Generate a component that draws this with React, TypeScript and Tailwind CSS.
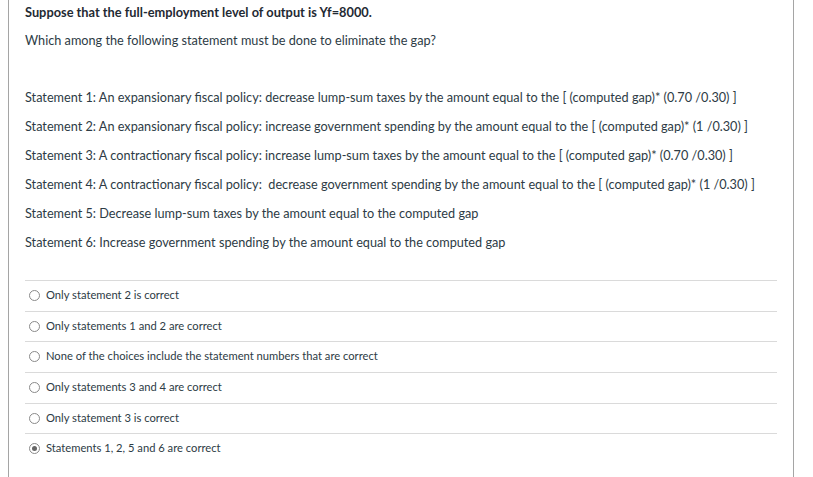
const statements = [
  'Statement 1: An expansionary fiscal policy: decrease lump-sum taxes by the amount equal to the [ (computed gap)* (0.70 /0.30) ]',
  'Statement 2: An expansionary fiscal policy: increase government spending by the amount equal to the [ (computed gap)* (1 /0.30) ]',
  'Statement 3: A contractionary fiscal policy: increase lump-sum taxes by the amount equal to the [ (computed gap)* (0.70 /0.30) ]',
  'Statement 4: A contractionary fiscal policy:\u00a0 decrease government spending by the amount equal to the [ (computed gap)* (1 /0.30) ]',
  'Statement 5: Decrease lump-sum taxes by the amount equal to the computed gap',
  'Statement 6: Increase government spending by the amount equal to the computed gap',
]

const options = [
  'Only statement 2 is correct',
  'Only statements 1 and 2 are correct',
  'None of the choices include the statement numbers that are correct',
  'Only statements 3 and 4 are correct',
  'Only statement 3 is correct',
  'Statements 1, 2, 5 and 6 are correct',
]

export default function App() {
  return (
    <div className="h-[477px] w-[813px] overflow-hidden bg-white font-['Lato',sans-serif] text-[#2d3b45]">
      <div className="ml-2 h-full w-[786px] border-x border-[#a5a5a5] pl-4 pr-4">
        <p className="pt-[4px] text-[12.8px] font-bold leading-4 text-[#1f2a33]">
          Suppose that the full-employment level of output is Yf=8000.
        </p>
        <p className="mt-[12px] text-[12.7px] leading-4">
          Which among the following statement must be done to eliminate the gap?
        </p>

        <div className="mt-[41px] flex flex-col gap-[13px]">
          {statements.map((s) => (
            <p key={s} className="text-[12.7px] leading-4 whitespace-nowrap">
              {s}
            </p>
          ))}
        </div>

        <div className="mt-[30px] w-[752px]">
          {options.map((o, i) => (
            <div
              key={o}
              className="flex h-[30.7px] items-center gap-[6px] border-t border-[#dadada] pl-[4px] pb-[1px] text-[11.2px]"
            >
              {i === 5 ? (
                <span className="flex h-[11px] w-[11px] items-center justify-center rounded-full border border-[#8a8a8a]">
                  <span className="h-[5px] w-[5px] rounded-full bg-[#666]" />
                </span>
              ) : (
                <span className="h-[11px] w-[11px] rounded-full border border-[#8a8a8a] bg-white" />
              )}
              <span>{o}</span>
            </div>
          ))}
        </div>
      </div>
    </div>
  )
}
